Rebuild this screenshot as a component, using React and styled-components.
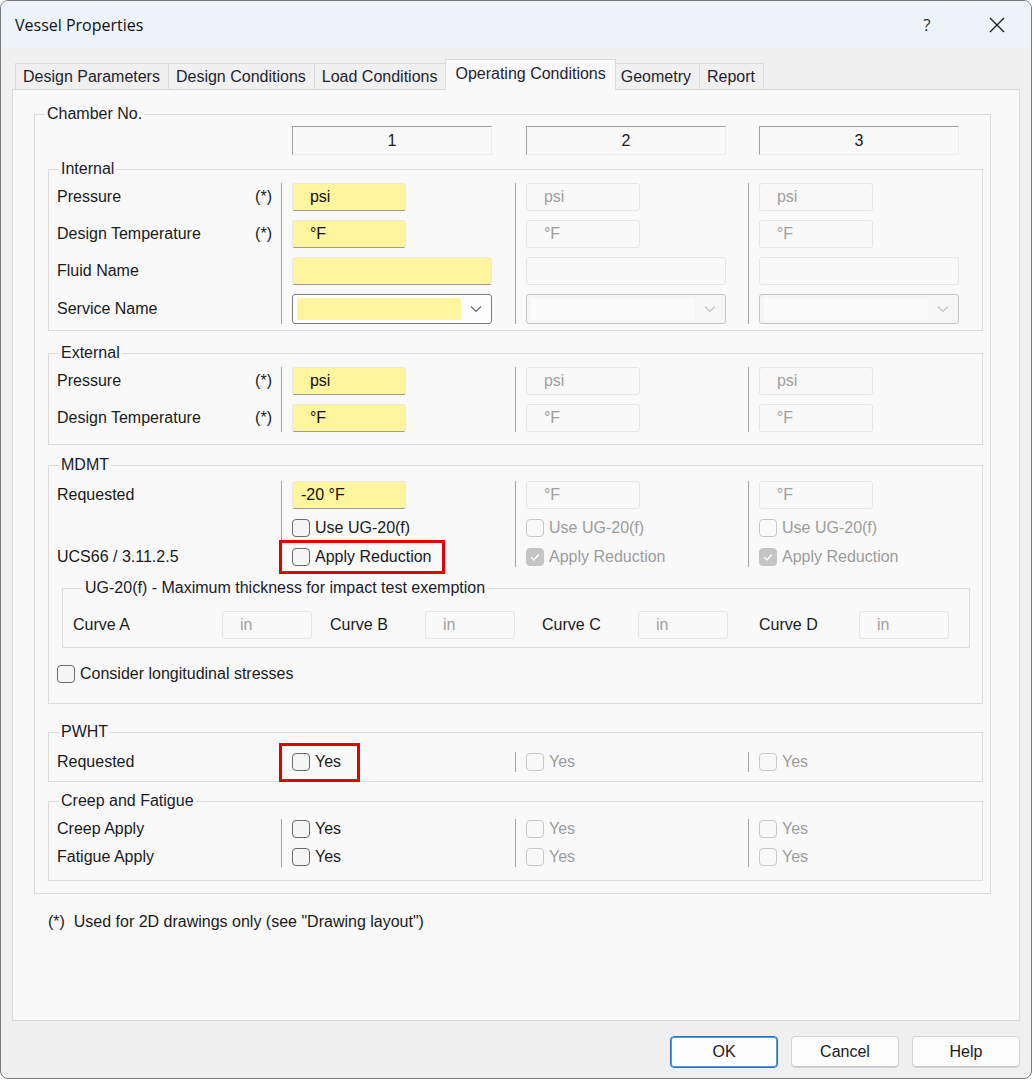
import React from 'react'
import styled, { createGlobalStyle } from 'styled-components'

const TABS = ['Design Parameters', 'Design Conditions', 'Load Conditions', 'Operating Conditions', 'Geometry', 'Report']
const ACTIVE_TAB = 'Operating Conditions'
const CHAMBERS = [1, 2, 3]
const CURVES = [
  { name: 'Curve A', labelWidth: 149, gap: 0 },
  { name: 'Curve B', labelWidth: 95, gap: 18 },
  { name: 'Curve C', labelWidth: 96, gap: 27 },
  { name: 'Curve D', labelWidth: 100, gap: 31 },
]

const CloseIcon = () => (
  <svg width="16" height="16" viewBox="0 0 16 16">
    <path d="M1 1L15 15M15 1L1 15" stroke="#1c1c1c" strokeWidth="1.3" fill="none" />
  </svg>
)

const ChevronIcon = ({ on }) => (
  <svg width="12" height="8" viewBox="0 0 12 8">
    <path d="M1 1.5L6 6.5L11 1.5" stroke={on ? '#5f5f5f' : '#c2c2c2'} strokeWidth="1.1" fill="none" />
  </svg>
)

const Check = ({ label, on, checked }) => (
  <CheckLabel $on={on}>
    <Box $on={on} $checked={checked}>
      {checked && (
        <svg width="12" height="12" viewBox="0 0 12 12">
          <path d="M2.2 6.3L4.9 9L9.8 3.4" stroke="#fff" strokeWidth="1.5" fill="none" />
        </svg>
      )}
    </Box>
    {label}
  </CheckLabel>
)

const Combo = ({ on }) => (
  <Select $on={on}>
    <SelectFill $on={on} />
    <SelectArrow><ChevronIcon on={on} /></SelectArrow>
  </Select>
)

const App = () => (
  <>
    <GlobalStyle />
    <Window>
      <TitleBar>
        <Title>Vessel Properties</Title>
        <Captions>
          <CaptionButton>?</CaptionButton>
          <CaptionButton><CloseIcon /></CaptionButton>
        </Captions>
      </TitleBar>

      <Body>
        <TabStrip>
          {TABS.map(t => <Tab key={t} $active={t === ACTIVE_TAB}>{t}</Tab>)}
        </TabStrip>

        <Panel>
          <Group $width={957}>
            <Legend>Chamber No.</Legend>
            <ChamberBody>
              <HeaderGrid>
                <span />
                {CHAMBERS.map(n => (
                  <HeaderCol key={n}><HeaderCell>{n}</HeaderCell></HeaderCol>
                ))}
              </HeaderGrid>

              <Group $mt={5}>
                <Legend>Internal</Legend>
                <Rows $gap={9} $pt={5} $pb={6}>
                  <LabelCol>
                    <Label $h={28}>Pressure<Star>(*)</Star></Label>
                    <Label $h={28}>Design Temperature<Star>(*)</Star></Label>
                    <Label $h={28}>Fluid Name</Label>
                    <Label $h={30}>Service Name</Label>
                  </LabelCol>
                  {CHAMBERS.map((n, i) => (
                    <ChamberCol key={n}>
                      <Field $w={114} $on={i === 0}>{'  psi'}</Field>
                      <Field $w={114} $on={i === 0}>{'  °F'}</Field>
                      <Field $w={200} $on={i === 0} />
                      <Combo on={i === 0} />
                    </ChamberCol>
                  ))}
                </Rows>
              </Group>

              <Group $mt={13}>
                <Legend>External</Legend>
                <Rows $gap={9} $pt={5} $pb={12}>
                  <LabelCol>
                    <Label $h={28}>Pressure<Star>(*)</Star></Label>
                    <Label $h={28}>Design Temperature<Star>(*)</Star></Label>
                  </LabelCol>
                  {CHAMBERS.map((n, i) => (
                    <ChamberCol key={n}>
                      <Field $w={114} $on={i === 0}>{'  psi'}</Field>
                      <Field $w={114} $on={i === 0}>{'  °F'}</Field>
                    </ChamberCol>
                  ))}
                </Rows>
              </Group>

              <Group $mt={11}>
                <Legend>MDMT</Legend>
                <Rows $gap={9} $pt={7} $pb={0}>
                  <LabelCol>
                    <Label $h={28}>Requested</Label>
                    <Label $h={20} />
                    <Label $h={20}>UCS66 / 3.11.2.5</Label>
                  </LabelCol>
                  {CHAMBERS.map((n, i) => (
                    <ChamberCol key={n}>
                      <Field $w={114} $on={i === 0}>{i === 0 ? '-20 °F' : '  °F'}</Field>
                      <Check label="Use UG-20(f)" on={i === 0} />
                      {i === 0 ? (
                        <Highlight $t={7} $r={13} $b={7} $l={13}>
                          <Check label="Apply Reduction" on />
                        </Highlight>
                      ) : (
                        <Check label="Apply Reduction" checked />
                      )}
                    </ChamberCol>
                  ))}
                </Rows>

                <SubGroup>
                  <Legend>UG-20(f) - Maximum thickness for impact test exemption</Legend>
                  <CurveRow>
                    {CURVES.map(c => (
                      <CurveField key={c.name} $gap={c.gap}>
                        <CurveLabel $w={c.labelWidth}>{c.name}</CurveLabel>
                        <Field $w={90}>{'  in'}</Field>
                      </CurveField>
                    ))}
                  </CurveRow>
                </SubGroup>

                <Stresses>
                  <Check label="Consider longitudinal stresses" on />
                </Stresses>
              </Group>

              <Group $mt={19}>
                <Legend>PWHT</Legend>
                <Rows $gap={9} $pt={11} $pb={9}>
                  <LabelCol>
                    <Label $h={20}>Requested</Label>
                  </LabelCol>
                  {CHAMBERS.map((n, i) => (
                    <ChamberCol key={n}>
                      {i === 0 ? (
                        <Highlight $t={9} $r={19} $b={10} $l={13}>
                          <Check label="Yes" on />
                        </Highlight>
                      ) : (
                        <Check label="Yes" />
                      )}
                    </ChamberCol>
                  ))}
                </Rows>
              </Group>

              <Group $mt={10}>
                <Legend>Creep and Fatigue</Legend>
                <Rows $gap={8} $pt={9} $pb={13}>
                  <LabelCol>
                    <Label $h={20}>Creep Apply</Label>
                    <Label $h={20}>Fatigue Apply</Label>
                  </LabelCol>
                  {CHAMBERS.map((n, i) => (
                    <ChamberCol key={n}>
                      <Check label="Yes" on={i === 0} />
                      <Check label="Yes" on={i === 0} />
                    </ChamberCol>
                  ))}
                </Rows>
              </Group>
            </ChamberBody>
          </Group>

          <Footnote>{'(*)  Used for 2D drawings only (see "Drawing layout")'}</Footnote>
        </Panel>

        <Footer>
          <Button $default>OK</Button>
          <Button>Cancel</Button>
          <Button>Help</Button>
        </Footer>
      </Body>
    </Window>
  </>
)

export default App

const GlobalStyle = createGlobalStyle`
  body {
    margin: 0;
    background: #ffffff;
    font-family: "Liberation Sans", Arial, sans-serif;
    font-size: 16px;
    color: #1a1a1a;
  }
  * { box-sizing: border-box; }
`

const Window = styled.div`
  width: 1032px;
  height: 1079px;
  border: 1px solid #7a7a7a;
  border-radius: 8px;
  overflow: hidden;
  background: #f0f0f0;
  display: flex;
  flex-direction: column;
`

const TitleBar = styled.div`
  height: 47px;
  flex: none;
  display: flex;
  align-items: center;
  justify-content: space-between;
  padding-left: 14px;
  background: #eef3f9;
`

const Title = styled.div`
  font-family: "Open Sans", "Liberation Sans", sans-serif;
  font-size: 16px;
  color: #111;
`

const Captions = styled.div`
  display: flex;
  gap: 24px;
  margin-right: 11px;
`

const CaptionButton = styled.div`
  width: 46px;
  height: 30px;
  display: flex;
  align-items: center;
  justify-content: center;
  font-family: "Open Sans", "Liberation Sans", sans-serif;
  font-size: 17px;
  color: #333;
`

const Body = styled.div`
  flex: 1;
  display: flex;
  flex-direction: column;
  padding: 11px 11px 0;
`

const TabStrip = styled.div`
  display: flex;
  align-items: flex-end;
  padding-left: 4px;
  height: 30px;
  position: relative;
  z-index: 1;
`

const Tab = styled.div`
  height: ${p => (p.$active ? 31 : 26)}px;
  margin: 0 ${p => (p.$active ? -2 : 0)}px ${p => (p.$active ? -1 : 0)}px -1px;
  padding: ${p => (p.$active ? '0 9px 3px' : '0 8px 0 7px')};
  display: flex;
  align-items: center;
  border: 1px solid #dcdcdc;
  border-bottom: none;
  background: ${p => (p.$active ? '#f9f9f9' : '#f0f0f0')};
  color: #1f1f2f;
  white-space: nowrap;
  position: relative;
  z-index: ${p => (p.$active ? 2 : 0)};
`

const Panel = styled.div`
  flex: 1;
  background: #f9f9f9;
  border: 1px solid #d9d9d9;
  padding: 15px 0 0 21px;
`

const Group = styled.fieldset`
  margin: ${p => p.$mt || 0}px 0 0;
  padding: 0;
  border: 1px solid #dcdcdc;
  width: ${p => (p.$width ? `${p.$width}px` : 'auto')};
  min-width: 0;
`

const Legend = styled.legend`
  margin-left: 10px;
  padding: 0 2px;
  line-height: 18px;
  color: #1a1a2a;
`

const ChamberBody = styled.div`
  padding: 3px 7px 12px 13px;
`

const HeaderGrid = styled.div`
  display: grid;
  grid-template-columns: 232px 234px 233px 233px;
  padding-left: 1px;
  margin-bottom: 1px;
`

const HeaderCol = styled.div`
  padding-left: 11px;
`

const HeaderCell = styled.div`
  width: 200px;
  height: 29px;
  display: flex;
  align-items: center;
  justify-content: center;
  border: 1px solid #ececec;
  border-top-color: #a0a0a0;
  border-left-color: #a0a0a0;
`

const Rows = styled.div`
  --row-gap: ${p => p.$gap}px;
  display: grid;
  grid-template-columns: 232px 234px 233px 233px;
  padding: ${p => p.$pt}px 0 ${p => p.$pb}px;
`

const LabelCol = styled.div`
  display: flex;
  flex-direction: column;
  gap: var(--row-gap);
`

const Label = styled.div`
  height: ${p => p.$h}px;
  display: flex;
  align-items: center;
  justify-content: space-between;
  padding: 0 9px 0 8px;
`

const Star = styled.span``

const ChamberCol = styled.div`
  display: flex;
  flex-direction: column;
  align-items: flex-start;
  gap: var(--row-gap);
  border-left: 1px solid #a4a4a4;
  padding-left: 10px;
`

const Field = styled.div`
  width: ${p => p.$w}px;
  height: 28px;
  display: flex;
  align-items: center;
  padding-left: 8px;
  white-space: pre;
  border-radius: 3px;
  border: 1px solid ${p => (p.$on ? '#e8e8e8' : '#e6e6e6')};
  border-bottom-color: ${p => (p.$on ? '#9c9c9c' : '#e6e6e6')};
  background: ${p => (p.$on ? '#fff59e' : '#f9f9f9')};
  color: ${p => (p.$on ? '#111' : '#a0a0a0')};
`

const Select = styled.div`
  width: 200px;
  height: 30px;
  display: flex;
  align-items: stretch;
  padding: 3px 0 3px 4px;
  border: 1px solid ${p => (p.$on ? '#7c7c7c' : '#c6c6c6')};
  border-radius: 3px;
  background: ${p => (p.$on ? '#fdfdfd' : '#f6f6f6')};
`

const SelectFill = styled.div`
  flex: 1;
  background: ${p => (p.$on ? '#fff59e' : '#fbfbfb')};
`

const SelectArrow = styled.div`
  width: 30px;
  display: flex;
  align-items: center;
  justify-content: center;
`

const CheckLabel = styled.label`
  height: 20px;
  display: inline-flex;
  align-items: center;
  gap: 5px;
  white-space: nowrap;
  color: ${p => (p.$on ? '#1a1a1a' : '#9c9c9c')};
`

const Box = styled.span`
  width: 18px;
  height: 18px;
  flex: none;
  display: flex;
  align-items: center;
  justify-content: center;
  border-radius: 4px;
  border: 1px solid ${p => (p.$checked ? '#c4c4c4' : p.$on ? '#6a6a6a' : '#c8c8c8')};
  background: ${p => (p.$checked ? '#c4c4c4' : p.$on ? '#f5f5f5' : '#f9f9f9')};
`

const Highlight = styled.span`
  position: relative;
  display: inline-flex;
  &::after {
    content: '';
    position: absolute;
    top: -${p => p.$t}px;
    right: -${p => p.$r}px;
    bottom: -${p => p.$b}px;
    left: -${p => p.$l}px;
    border: 3px solid #e30000;
  }
`

const SubGroup = styled.fieldset`
  margin: 12px 12px 0 13px;
  padding: 14px 0 8px 10px;
  border: 1px solid #dcdcdc;
  min-width: 0;
`

const CurveRow = styled.div`
  display: flex;
  align-items: center;
`

const CurveField = styled.div`
  display: flex;
  align-items: center;
  margin-left: ${p => p.$gap}px;
`

const CurveLabel = styled.div`
  width: ${p => p.$w}px;
`

const Stresses = styled.div`
  padding: 16px 0 16px 8px;
`

const Footnote = styled.div`
  margin: 19px 0 0 14px;
  line-height: 18px;
  white-space: pre;
`

const Footer = styled.div`
  height: 57px;
  flex: none;
  display: flex;
  justify-content: flex-end;
  gap: 13px;
  padding: 15px 0 0;
`

const Button = styled.div`
  width: 108px;
  height: 32px;
  display: flex;
  align-items: center;
  justify-content: center;
  border-radius: 4px;
  background: #fdfdfd;
  border: 1px solid ${p => (p.$default ? '#1a6fc4' : '#d4d4d4')};
  box-shadow: ${p => (p.$default ? 'inset 0 0 0 1px #5a9be0' : 'inset 0 -1px 0 #c4c4c4')};
  color: #1a1a1a;
`
